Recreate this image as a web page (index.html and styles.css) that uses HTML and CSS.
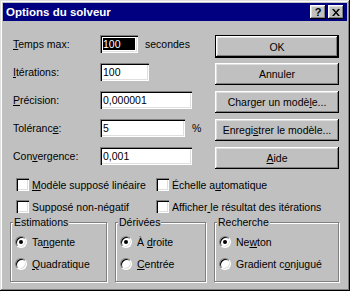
FILE: index.html
```html
<!DOCTYPE html>
<html lang="fr">

<head>
    <meta charset="UTF-8">
    <title>Options du solveur</title>
    <link rel="stylesheet" href="styles.css">
</head>

<body>
    <div class="window">
        <div class="titlebar">
            <span class="title">Options du solveur</span>
            <div class="title-buttons">
                <span class="tbtn">?</span>
                <span class="tbtn">
                    <svg width="8" height="7" viewBox="0 0 8 7"><path d="M0 0h2l2 2.5 2-2.5h2l-3 3.5 3 3.5h-2l-2-2.5-2 2.5h-2l3-3.5z" fill="#000"/></svg>
                </span>
            </div>
        </div>

        <div class="content">
            <div class="form-grid">
                <label class="lbl"><u>T</u>emps max:</label>
                <div class="field"><span class="input w38 focus"><span class="sel">100</span></span><span class="unit">secondes</span></div>
                <button class="btn default">OK</button>

                <label class="lbl"><u>I</u>térations:</label>
                <div class="field"><span class="input w49">100</span></div>
                <button class="btn">Annuler</button>

                <label class="lbl"><u>P</u>récision:</label>
                <div class="field"><span class="input w92">0,000001</span></div>
                <button class="btn">Charger un modè<u>l</u>e...</button>

                <label class="lbl">Toléranc<u>e</u>:</label>
                <div class="field"><span class="input w85">5</span><span class="unit">%</span></div>
                <button class="btn">Enregi<u>s</u>trer le modèle...</button>

                <label class="lbl">Con<u>v</u>ergence:</label>
                <div class="field"><span class="input w92">0,001</span></div>
                <button class="btn"><u>A</u>ide</button>
            </div>

            <div class="checks">
                <div class="check"><span class="box"></span><span><u>M</u>odèle supposé linéaire</span></div>
                <div class="check"><span class="box"></span><span>Échelle a<u>u</u>tomatique</span></div>
                <div class="check"><span class="box"></span><span>Supposé non-né<u>g</u>atif</span></div>
                <div class="check"><span class="box"></span><span>Afficher<u> </u>le résultat des itérations</span></div>
            </div>

            <div class="groups">
                <div class="group g-est">
                    <span class="legend">Estimations</span>
                    <div class="radio-row"><span class="radio on"></span><span>Ta<u>n</u>gente</span></div>
                    <div class="radio-row"><span class="radio"></span><span><u>Q</u>uadratique</span></div>
                </div>
                <div class="group g-der">
                    <span class="legend">Dérivées</span>
                    <div class="radio-row"><span class="radio on"></span><span>À <u>d</u>roite</span></div>
                    <div class="radio-row"><span class="radio"></span><span><u>C</u>entrée</span></div>
                </div>
                <div class="group g-rech">
                    <span class="legend">Recherche</span>
                    <div class="radio-row"><span class="radio on"></span><span>Ne<u>w</u>ton</span></div>
                    <div class="radio-row"><span class="radio"></span><span>Gradient c<u>o</u>njugué</span></div>
                </div>
            </div>
        </div>
    </div>
</body>

</html>
```

FILE: styles.css
```css
body {
    margin: 0;
    font-family: "Liberation Sans", Arial, sans-serif;
    font-size: 10.5px;
    color: #000;
}

.window {
    width: 350px;
    height: 291px;
    box-sizing: border-box;
    padding: 3px;
    background: #c0c0c0;
    box-shadow: inset -1px -1px #000, inset 1px 1px #dfdfdf, inset -2px -2px #808080, inset 2px 2px #fff;
}

.titlebar {
    height: 18px;
    background: #000080;
    display: flex;
    align-items: center;
    justify-content: space-between;
    padding: 0 3px 0 3px;
}

.title {
    color: #fff;
    font-weight: bold;
    font-size: 11.5px;
}

.title-buttons {
    display: flex;
    gap: 2px;
}

.tbtn {
    width: 16px;
    height: 14px;
    box-sizing: border-box;
    background: #c0c0c0;
    box-shadow: inset -1px -1px #000, inset 1px 1px #fff, inset -2px -2px #808080, inset 2px 2px #dfdfdf;
    display: flex;
    align-items: center;
    justify-content: center;
    font-weight: bold;
    font-size: 11px;
    line-height: 1;
}

.content {
    padding: 14px 8px 0 7px;
}

.form-grid {
    display: grid;
    grid-template-columns: 87px 115px 124px;
    grid-template-rows: repeat(5, 22px);
    row-gap: 6px;
    margin-left: 3px;
}

.lbl {
    line-height: 18px;
}

.field {
    display: flex;
    align-items: center;
    height: 18px;
}

.input {
    box-sizing: border-box;
    height: 18px;
    background: #fff;
    box-shadow: inset 1px 1px #808080, inset 2px 2px #000, inset -1px -1px #fff, inset -2px -2px #dfdfdf;
    padding: 2px 3px;
    line-height: 14px;
}

.w38 { width: 38px; }
.w49 { width: 49px; }
.w85 { width: 85px; }
.w92 { width: 92px; }

.input.focus {
    padding: 3px;
}

.sel {
    display: block;
    height: 12px;
    line-height: 12px;
    background: #000;
    color: #fff;
}

.unit {
    margin-left: 7px;
}

.btn {
    box-sizing: border-box;
    width: 124px;
    height: 22px;
    padding: 0;
    border: none;
    background: #c0c0c0;
    font: inherit;
    color: #000;
    box-shadow: inset -1px -1px #000, inset 1px 1px #fff, inset -2px -2px #808080, inset 2px 2px #dfdfdf;
}

.btn.default {
    height: 23px;
    box-shadow: inset 0 0 0 1px #000, inset -2px -2px #000, inset 2px 2px #fff, inset -3px -3px #808080, inset 3px 3px #dfdfdf;
}

.checks {
    display: grid;
    grid-template-columns: 140px auto;
    row-gap: 9px;
    margin: 9px 0 0 6px;
}

.check {
    display: flex;
    align-items: center;
    gap: 3px;
    height: 13px;
    white-space: nowrap;
}

.box {
    width: 13px;
    height: 13px;
    box-sizing: border-box;
    background: #fff;
    box-shadow: inset 1px 1px #808080, inset 2px 2px #000, inset -1px -1px #fff, inset -2px -2px #dfdfdf;
}

.groups {
    display: flex;
    gap: 8px;
    margin-top: 9px;
}

.group {
    position: relative;
    box-sizing: border-box;
    height: 60px;
    border: 1px solid #808080;
    box-shadow: inset 1px 1px #fff, 1px 1px #fff;
    padding: 12px 0 0 4px;
    display: flex;
    flex-direction: column;
    gap: 8px;
}

.g-est { width: 97px; }
.g-der { width: 91px; }
.g-rech { width: 125px; }

.legend {
    position: absolute;
    top: -7px;
    left: 2px;
    padding: 0 1px;
    background: #c0c0c0;
    line-height: 13px;
}

.radio-row {
    display: flex;
    align-items: center;
    gap: 5px;
    height: 14px;
    white-space: nowrap;
}

.radio {
    position: relative;
    width: 12px;
    height: 12px;
    box-sizing: border-box;
    border-radius: 50%;
    background: #fff;
    border: 1px solid;
    border-color: #808080 #fff #fff #808080;
    box-shadow: inset 1px 1px #000, inset -1px -1px #dfdfdf;
}

.radio.on::after {
    content: "";
    position: absolute;
    left: 3px;
    top: 3px;
    width: 4px;
    height: 4px;
    border-radius: 50%;
    background: #000;
}
```
